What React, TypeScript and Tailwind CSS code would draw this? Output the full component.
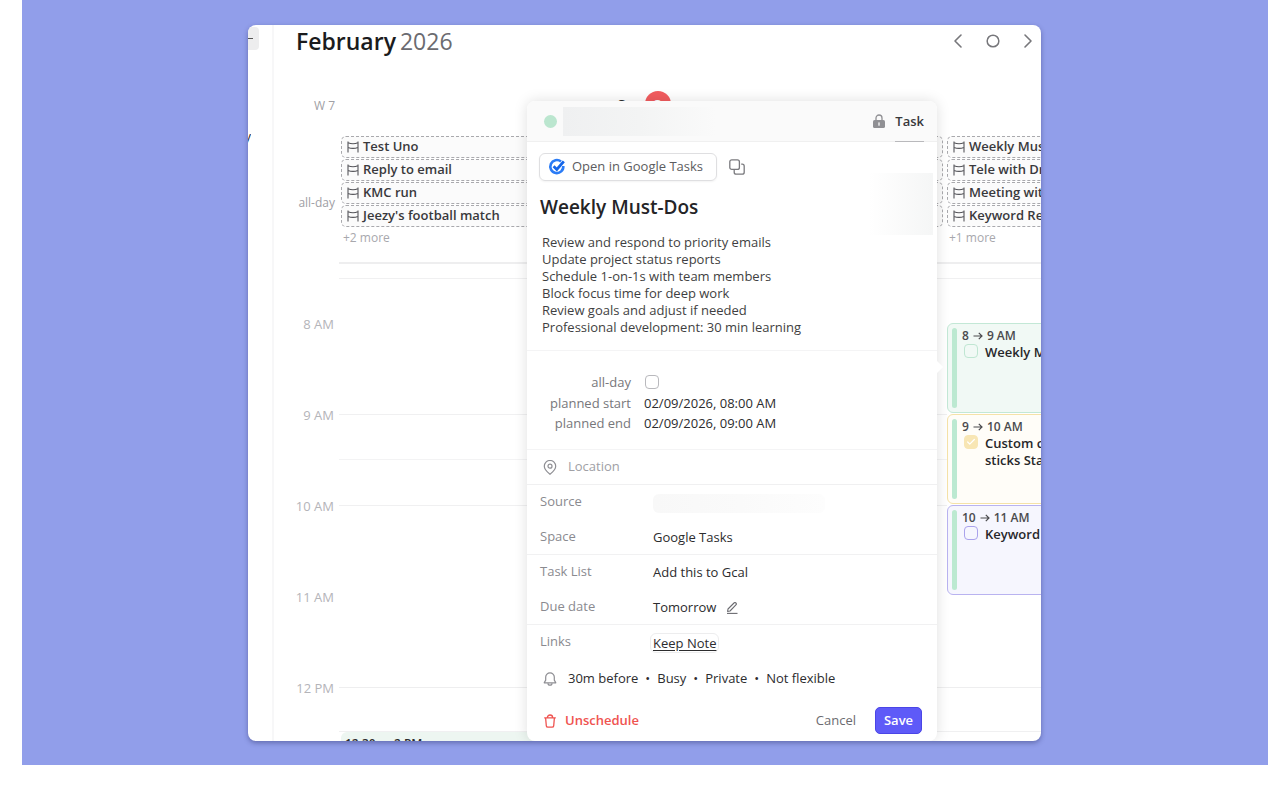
import { Check, ChevronLeft, ChevronRight, Circle } from 'lucide-react'
import clsx from 'clsx'

import type { ReactNode } from 'react'

interface CalendarEvent {
  from: string
  to: string
  title: string
  tone: 'green' | 'yellow' | 'violet'
  done?: boolean
}

interface HourRow {
  label: string
  line?: boolean
  halfLine?: boolean
  event?: CalendarEvent
}

const ALL_DAY_FIRST = ['Test Uno', 'Reply to email', 'KMC run', "Jeezy's football match"]
const ALL_DAY_LAST = ['Weekly Must-Dos', 'Tele with Dr Smith', 'Meeting with team', 'Keyword Research']

const HOURS: HourRow[] = [
  {
    label: '8 AM',
    event: { from: '8', to: '9 AM', title: 'Weekly Must-Dos', tone: 'green' },
  },
  {
    label: '9 AM',
    line: true,
    halfLine: true,
    event: { from: '9', to: '10 AM', title: 'Custom chop\nsticks Standard', tone: 'yellow', done: true },
  },
  {
    label: '10 AM',
    line: true,
    event: { from: '10', to: '11 AM', title: 'Keyword Research', tone: 'violet' },
  },
  { label: '11 AM' },
]

const DESCRIPTION = [
  'Review and respond to priority emails',
  'Update project status reports',
  'Schedule 1-on-1s with team members',
  'Block focus time for deep work',
  'Review goals and adjust if needed',
  'Professional development: 30 min learning',
]

export default function App() {
  return (
    <div className="bg-white pr-5 pl-[22px] font-['Open_Sans','Noto_Sans',sans-serif] text-[13px] text-[#2c2c2e]">
      <main className="bg-[#919eea] pt-[25px] pr-px pb-6">
        <div className="relative mx-auto flex w-full max-w-[793px] overflow-hidden rounded-lg bg-white shadow-[0_2px_5px_rgba(30,35,90,0.4)]">
          <SidebarEdge />
          <Calendar />
          <TaskPopover />
        </div>
      </main>
    </div>
  )
}

function SidebarEdge() {
  return (
    <aside className="flex w-[26px] shrink-0 flex-col border-r-2 border-[#f7f7f8]">
      <div className="mt-0.5 flex h-[23px] w-[11px] items-center rounded-r-sm bg-[#ededee]">
        <span className="h-px w-[5px] bg-[#555]" />
      </div>
      <div className="mt-[76px] flex w-[3px] justify-end overflow-hidden leading-5">
        <span>y</span>
      </div>
    </aside>
  )
}

function Calendar() {
  return (
    <section className="min-w-0 flex-1 overflow-hidden">
      <header className="flex h-[32px] items-center justify-between pr-px pl-[22px]">
        <h1 className="flex gap-1 text-[23px] leading-8 font-semibold text-[#1b1b1d]">
          February <span className="font-normal text-[#6b6b70]">2026</span>
        </h1>
        <nav className="flex items-center gap-[14px] text-[#77777b]">
          <button type="button" aria-label="Previous">
            <ChevronLeft className="size-6" strokeWidth={1.6} />
          </button>
          <button type="button" aria-label="Today" className="px-0.5">
            <Circle className="size-[14px]" strokeWidth={2.6} />
          </button>
          <button type="button" aria-label="Next">
            <ChevronRight className="size-6" strokeWidth={1.6} />
          </button>
        </nav>
      </header>

      {/* Day names */}
      <div className="mt-[34px] grid h-[45px] grid-cols-[67px_repeat(4,202px)]">
        <span className="pt-[7px] pr-1.5 text-right text-xs leading-4 text-[#a0a0a5]">W 7</span>
        <span />
        <div className="flex items-start justify-center text-[15px] leading-[26px] font-semibold">
          <span>Sun</span>
          <span className="size-[26px] rounded-full bg-[#f25c5f] text-center text-white">8</span>
        </div>
      </div>

      {/* All-day chips */}
      <div className="grid h-[126px] grid-cols-[67px_repeat(4,202px)]">
        <span className="pt-[59px] pr-1.5 text-right text-xs leading-4 text-[#a0a0a5]">all-day</span>
        <AllDayColumn items={ALL_DAY_FIRST} more="+2 more" />
        <AllDayColumn items={['', '', '', '']} />
        <AllDayColumn items={['', '', '', '']} />
        <AllDayColumn items={ALL_DAY_LAST} more="+1 more" />
      </div>

      {/* Hour grid */}
      <div className="ml-[65px] h-4 border-t-2 border-[#eeeeef]" />
      <div className="ml-[65px] h-[45px] border-t border-[#f0f0f1]" />
      {HOURS.map((row) => (
        <div key={row.label} className="grid h-[91px] grid-cols-[65px_608px_202px]">
          <HourLabel>{row.label}</HourLabel>
          <div className={clsx('border-t', row.line ? 'border-[#f0f0f1]' : 'border-transparent')}>
            <div className={clsx('h-[45px] border-b', row.halfLine ? 'border-[#f3f3f4]' : 'border-transparent')} />
          </div>
          {row.event && <EventCard event={row.event} />}
        </div>
      ))}
      <div className="grid h-[54px] grid-cols-[65px_1fr]">
        <HourLabel>12 PM</HourLabel>
        <div className="border-t border-[#eeeeef]">
          <div className="h-[44px] border-b border-[#f0f0f1]" />
          <div className="ml-0.5 w-[198px] rounded-md bg-[#edf6f1] pt-1 pl-1 text-xs font-semibold">12:30 → 2 PM</div>
        </div>
      </div>
    </section>
  )
}

function HourLabel({ children }: { children: ReactNode }) {
  return <span className="-mt-[7px] pr-[5px] text-right leading-4 text-[#b4b4b9]">{children}</span>
}

function AllDayColumn({ items, more }: { items: string[]; more?: string }) {
  return (
    <div className="flex flex-col gap-px pr-1">
      {items.map((title, i) => (
        <div
          key={i}
          className="flex h-[22px] items-center gap-1 overflow-hidden rounded-[5px] border border-dashed border-[#a9a9ad] bg-[#fbfbfb] pl-[5px] font-semibold whitespace-nowrap text-[#39393c]"
        >
          <BannerIcon />
          <span>{title}</span>
        </div>
      ))}
      {more && <span className="pt-0.5 pl-0.5 text-xs leading-4 text-[#a8a8ad]">{more}</span>}
    </div>
  )
}

const TONES = {
  green: { card: 'border-[#c3e8d6] bg-[#f1f9f5]', box: 'border-[#bfe6d2]' },
  yellow: { card: 'border-[#f5e2a8] bg-[#fffdf8]', box: 'border-[#f8e6b4] bg-[#f8e6b4]' },
  violet: { card: 'border-[#b9b3f0] bg-[#f6f6fe]', box: 'border-[#aaa2ec]' },
}

function EventCard({ event }: { event: CalendarEvent }) {
  const tone = TONES[event.tone]

  return (
    <article className={clsx('flex h-[90px] gap-[5px] rounded-md border py-1 pl-1', tone.card)}>
      <span className="w-[5px] shrink-0 rounded-full bg-[#bce9d1]" />
      <div className="min-w-0">
        <p className="flex items-center gap-1 text-xs leading-4 font-semibold text-[#4a4a4d]">
          {event.from}
          <ArrowIcon />
          {event.to}
        </p>
        <label className="flex gap-[7px] pl-0.5 leading-[17px] font-semibold text-[#27272a]">
          <span className="relative size-[14px] shrink-0">
            <input
              type="checkbox"
              defaultChecked={event.done}
              className={clsx('block size-[14px] appearance-none rounded-sm border', tone.box)}
            />
            {event.done && <Check className="absolute top-0.5 left-0.5 size-2.5 text-white" strokeWidth={3} />}
          </span>
          <span className="whitespace-pre">{event.title}</span>
        </label>
      </div>
    </article>
  )
}

function TaskPopover() {
  return (
    <div className="absolute top-[76px] bottom-0 left-[279px] w-[410px] rounded-lg bg-white shadow-[0_0_14px_rgba(0,0,0,0.13)]">
      <span className="absolute top-[261px] -right-1 size-[10px] rotate-45 bg-white" />
      <div className="relative flex h-full flex-col">
        <div className="flex h-[41px] shrink-0 items-center rounded-t-lg border-b border-[#f0f0f0] bg-[#fafafa] pr-[13px] pl-[17px]">
          <span className="size-[13px] rounded-full bg-[#bbe6cf]" />
          <span className="ml-1.5 h-[29px] w-[153px] bg-linear-to-r from-[#eff0f1] via-[#f3f4f4] to-[#fafafa]" />
          <LockIcon />
          <button
            type="button"
            className="ml-2.5 h-[41px] border-b border-[#b9b9bc] pt-0.5 font-semibold text-[#38383b]"
          >
            Task
          </button>
        </div>

        <div className="flex h-[209px] shrink-0 justify-between border-b border-[#f4f4f5] pt-[11px] pr-1 pl-3">
          <div>
            <div className="flex items-center gap-3">
              <button
                type="button"
                className="flex h-7 w-[178px] items-center gap-1.5 rounded-md border border-[#dfdfe1] pl-2 font-medium whitespace-nowrap text-[#5c5c60] shadow-xs"
              >
                <GoogleTasksIcon />
                Open in Google Tasks
              </button>
              <button type="button" aria-label="Copy link">
                <CopyIcon />
              </button>
            </div>
            <h2 className="mt-3 pl-px text-[19px] leading-7 font-semibold text-[#242427]">Weekly Must-Dos</h2>
            <div className="mt-[13px] pl-[3px] leading-[17px] text-[#3f3f42]">
              {DESCRIPTION.map((line) => (
                <p key={line}>{line}</p>
              ))}
            </div>
          </div>
          <span className="mt-5 h-[62px] w-16 bg-linear-to-r from-white to-[#f5f6f6]" />
        </div>

        {/* Schedule */}
        <div className="grid h-[99px] shrink-0 grid-cols-[104px_1fr] content-start gap-x-[13px] border-b border-[#f4f4f5] pt-5">
          <label htmlFor="all-day" className="text-right leading-[22px] text-[#77777b]">
            all-day
          </label>
          <div className="flex items-center pl-px">
            <input id="all-day" type="checkbox" className="size-[14px] appearance-none rounded-sm border border-[#b9b9bd]" />
          </div>
          <label htmlFor="start" className="text-right leading-5 text-[#77777b]">
            planned start
          </label>
          <input id="start" type="text" defaultValue="02/09/2026, 08:00 AM" className="h-5 w-[160px]" />
          <label htmlFor="end" className="text-right leading-5 text-[#77777b]">
            planned end
          </label>
          <input id="end" type="text" defaultValue="02/09/2026, 09:00 AM" className="h-5 w-[160px]" />
        </div>

        <label className="flex h-[35px] shrink-0 items-center gap-[11px] border-b border-[#f0f0f1] pl-4">
          <PinIcon />
          <input
            type="text"
            aria-label="Location"
            placeholder="Location"
            className="w-[200px] placeholder:text-[#a0a0a5]"
          />
        </label>

        <DetailRow label="Source">
          <span className="h-[19px] w-[172px] rounded-md bg-linear-to-r from-[#f8f8f8] via-[#fafafa] to-[#fdfdfd]" />
        </DetailRow>
        <DetailRow label="Space" divided>
          Google Tasks
        </DetailRow>
        <DetailRow label="Task List">Add this to Gcal</DetailRow>
        <DetailRow label="Due date" divided>
          Tomorrow
          <button type="button" aria-label="Edit due date" className="ml-2.5">
            <PencilIcon />
          </button>
        </DetailRow>
        <DetailRow label="Links">
          <a href="#keep" className="-ml-[3px] rounded-md border border-[#ededee] px-0.5 leading-[18px] underline underline-offset-2">
            Keep Note
          </a>
        </DetailRow>

        <div className="flex h-[38px] shrink-0 items-center gap-[11px] pl-4">
          <BellIcon />
          <p className="flex gap-[7px]">
            30m before <span>•</span> Busy <span>•</span> Private <span>•</span> Not flexible
          </p>
        </div>

        <div className="flex flex-1 items-center pt-0.5 pr-[15px] pl-4">
          <button type="button" className="flex items-center gap-2 font-semibold text-[#ef5350]">
            <TrashIcon />
            Unschedule
          </button>
          <button type="button" className="ml-auto font-medium text-[#6b6b70]">
            Cancel
          </button>
          <button
            type="button"
            className="ml-[19px] h-[27px] w-[47px] rounded-[5px] border border-[#4a45e6] bg-[#5e5af8] font-semibold text-white"
          >
            Save
          </button>
        </div>
      </div>
    </div>
  )
}

function DetailRow({ label, divided, children }: { label: string; divided?: boolean; children: ReactNode }) {
  return (
    <div
      className={clsx(
        'grid h-[35px] shrink-0 grid-cols-[113px_1fr] items-center border-b pl-[13px]',
        divided ? 'border-[#f1f1f2]' : 'border-transparent',
      )}
    >
      <span className="text-[#8a8a8f]">{label}</span>
      <div className="flex items-center pt-0.5">{children}</div>
    </div>
  )
}

function BannerIcon() {
  return (
    <svg className="size-3 shrink-0" viewBox="0 0 12 12" fill="none" stroke="#55555a" strokeWidth={1.1}>
      <path d="M1 0.5v11M11 0.5v11M1 1.8c3 1.2 7 1.2 10 0M1 6.4c3 1.2 7 1.2 10 0" />
    </svg>
  )
}

function ArrowIcon() {
  return (
    <svg className="h-2.5 w-2.5" viewBox="0 0 10 10" fill="none" stroke="currentColor" strokeWidth={1.2}>
      <path d="M0.5 5h8.5M5.8 1.8 9 5 5.8 8.2" />
    </svg>
  )
}

function LockIcon() {
  return (
    <svg className="ml-auto h-[14px] w-3" viewBox="0 0 12 14">
      <path d="M3 6.5V4a3 3 0 0 1 6 0v2.5" fill="none" stroke="#909094" strokeWidth={1.3} />
      <rect x="0" y="6" width="12" height="8" rx="1.6" fill="#909094" />
      <path d="M6 8.8v2.4" stroke="#fafafa" strokeWidth={1.3} strokeLinecap="round" />
    </svg>
  )
}

function GoogleTasksIcon() {
  return (
    <svg className="size-[18px] shrink-0" viewBox="0 0 18 18" fill="none">
      <path d="M13 3.6A6.5 6.5 0 1 0 15.3 8" stroke="#2b7cf6" strokeWidth={2.6} />
      <path d="m5.6 8.3 3.2 3.1 7-8" stroke="#1565e8" strokeWidth={2.8} />
    </svg>
  )
}

function CopyIcon() {
  return (
    <svg className="size-4" viewBox="0 0 16 16" fill="none" stroke="#7a7a7e" strokeWidth={1.3}>
      <rect x="0.8" y="0.8" width="9.6" height="9.6" rx="2" />
      <path d="M12.2 5.2h1a2 2 0 0 1 2 2v6a2 2 0 0 1-2 2h-6a2 2 0 0 1-2-2v-2.6" />
    </svg>
  )
}

function PinIcon() {
  return (
    <svg className="h-[15px] w-[14px] shrink-0" viewBox="0 0 14 15" fill="none" stroke="#8e8e93" strokeWidth={1.2}>
      <path d="M7 14.2C4 11.8 1.3 9.4 1.3 6.2a5.7 5.7 0 0 1 11.4 0c0 3.2-2.7 5.6-5.7 8Z" />
      <circle cx="7" cy="6.2" r="2" />
    </svg>
  )
}

function PencilIcon() {
  return (
    <svg className="size-3 shrink-0" viewBox="0 0 12 12" fill="none" stroke="#6b6b70" strokeWidth={1.1}>
      <path d="M1.6 9.4 2 7l6-6a1.3 1.3 0 0 1 1.9 1.9L4 9Z" strokeLinejoin="round" />
      <path d="M1 11.4h10.5" />
    </svg>
  )
}

function BellIcon() {
  return (
    <svg className="size-[14px] shrink-0" viewBox="0 0 14 14" fill="none" stroke="#8e8e93" strokeWidth={1.2}>
      <path d="M7 0.8a4.3 4.3 0 0 0-4.3 4.3v3L1.2 10.8h11.6l-1.5-2.7v-3A4.3 4.3 0 0 0 7 0.8Z" strokeLinejoin="round" />
      <path d="M5 11.2a2 2 0 0 0 4 0" />
    </svg>
  )
}

function TrashIcon() {
  return (
    <svg className="size-[14px] shrink-0" viewBox="0 0 14 14" fill="none" stroke="currentColor" strokeWidth={1.3}>
      <path d="M1.2 3.8h11.6M2.6 3.8l.7 8a1.6 1.6 0 0 0 1.6 1.4h4.2a1.6 1.6 0 0 0 1.6-1.4l.7-8M4.4 3.6a2.6 2.6 0 0 1 5.2 0" />
    </svg>
  )
}
